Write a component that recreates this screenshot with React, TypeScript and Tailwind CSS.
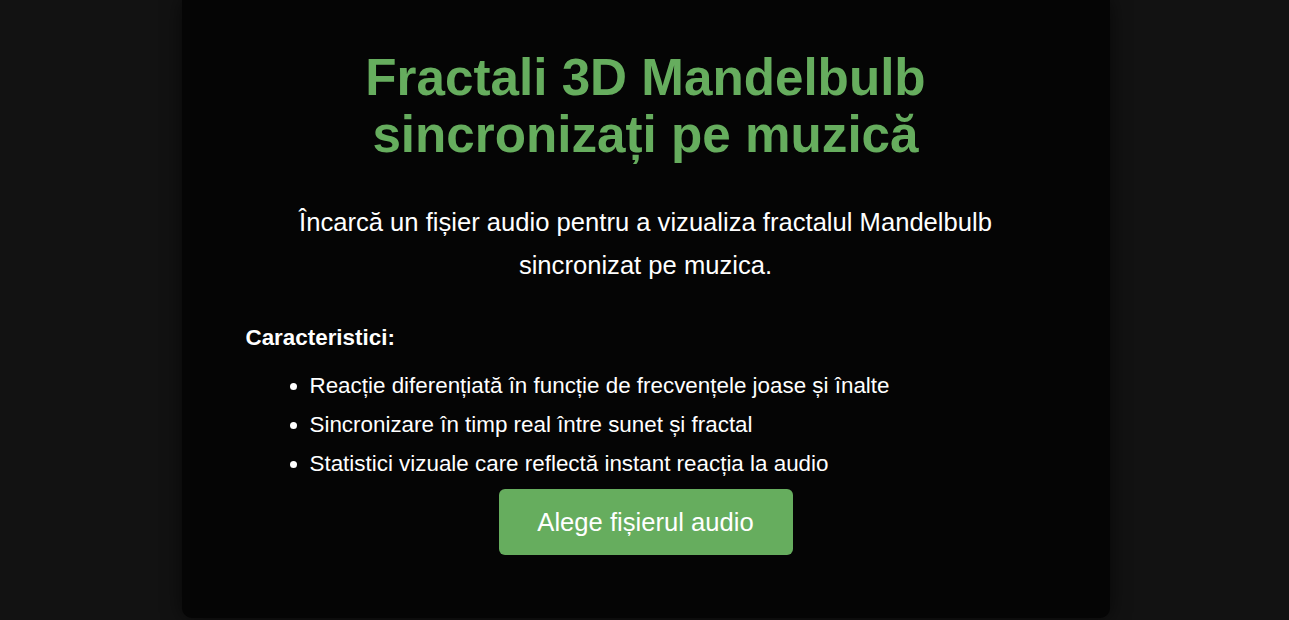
export default function App() {
  const features = [
    "Reacție diferențiată în funcție de frecvențele joase și înalte",
    "Sincronizare în timp real între sunet și fractal",
    "Statistici vizuale care reflectă instant reacția la audio",
  ];

  return (
    <div className="h-[620px] overflow-hidden bg-[#121212] flex justify-center pl-[2px] pb-[2px]" style={{ fontFamily: "'Liberation Sans', Arial, sans-serif" }}>
      <div className="w-[928px] h-full bg-[#050505] rounded-b-[10px] shadow-[0_0_20px_rgba(0,0,0,0.6)] flex flex-col items-center pt-[49px] px-16">
        <h1 className="text-[51.2px] leading-[57px] font-bold text-[#66ad5e] text-center">
          Fractali 3D Mandelbulb
          <br />
          sincronizați pe muzică
        </h1>
        <p className="mt-[38px] text-[25.6px] leading-[43px] text-white text-center">
          Încarcă un fișier audio pentru a vizualiza fractalul Mandelbulb
          <br />
          sincronizat pe muzica.
        </p>
        <div className="self-stretch mt-[37px]">
          <h3 className="text-[22.4px] leading-[27px] font-bold text-white">Caracteristici:</h3>
          <ul className="mt-[15px] pl-16 list-disc text-white text-[22.4px] leading-[39px]">
            {features.map((f) => (
              <li key={f}>{f}</li>
            ))}
          </ul>
        </div>
        <button className="mt-[6px] w-[294px] h-[66px] rounded-[6px] bg-[#66ad5e] text-white text-[25.6px]">
          Alege fișierul audio
        </button>
      </div>
    </div>
  );
}
